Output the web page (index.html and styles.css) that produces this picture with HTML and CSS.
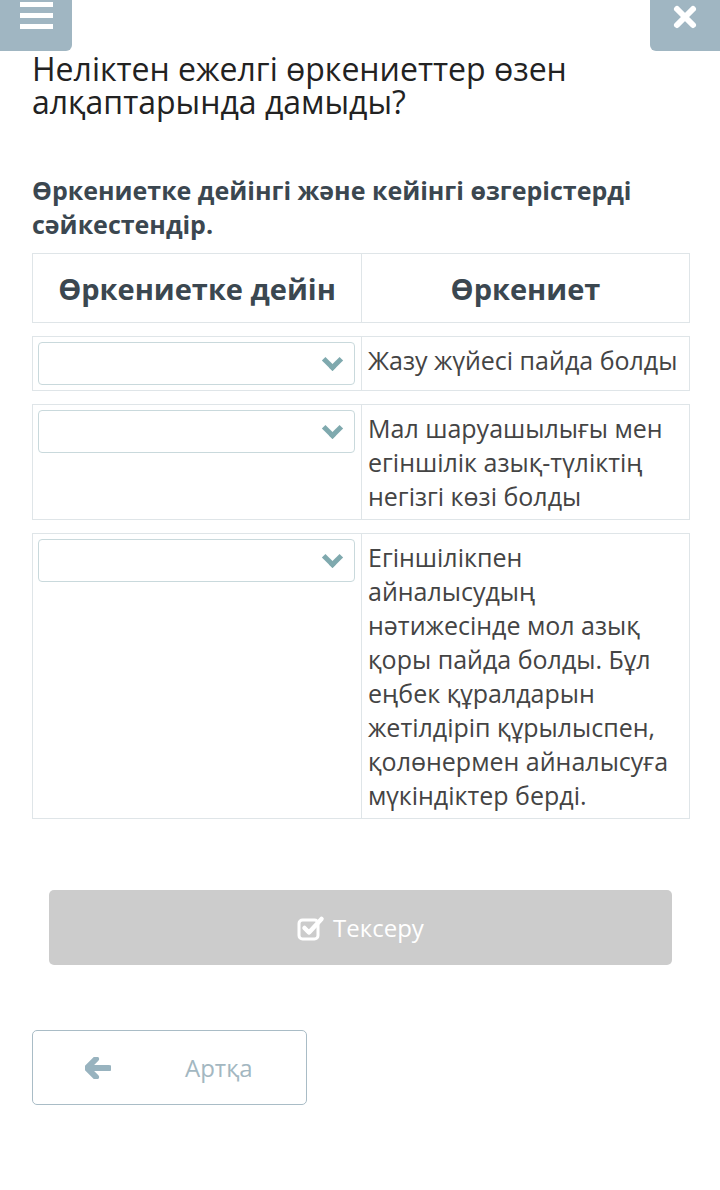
FILE: index.html
```html
<!DOCTYPE html>
<html lang="kk">
  <head>
    <meta charset="UTF-8" />
    <meta name="viewport" content="width=device-width, initial-scale=1.0" />
    <title>Сәйкестендір</title>
    <link rel="stylesheet" href="styles.css">
  </head>
  <body>
    <div class="topbar">
      <button class="menu-btn" type="button" aria-label="Мәзір">
        <span></span><span></span><span></span>
      </button>
      <button class="close-btn" type="button" aria-label="Жабу">
        <svg width="26" height="26" viewBox="0 0 26 26">
          <path d="M5 5 L21 21 M21 5 L5 21" stroke="#fff" stroke-width="6" stroke-linecap="round" />
        </svg>
      </button>
    </div>

    <div class="content">
      <h1 class="question">Неліктен ежелгі өркениеттер өзен алқаптарында дамыды?</h1>
      <h2 class="task">Өркениетке дейінгі және кейінгі өзгерістерді сәйкестендір.</h2>

      <div class="match-head">
        <div>Өркениетке дейін</div>
        <div>Өркениет</div>
      </div>

      <div class="match-row">
        <div class="pick">
          <div class="select"><span class="chevron"></span></div>
        </div>
        <div class="answer">Жазу жүйесі пайда болды</div>
      </div>

      <div class="match-row">
        <div class="pick">
          <div class="select"><span class="chevron"></span></div>
        </div>
        <div class="answer">Мал шаруашылығы мен егіншілік азық-түліктің негізгі көзі болды</div>
      </div>

      <div class="match-row">
        <div class="pick">
          <div class="select"><span class="chevron"></span></div>
        </div>
        <div class="answer">Егіншілікпен айналысудың нәтижесінде мол азық қоры пайда болды. Бұл еңбек құралдарын жетілдіріп құрылыспен, қолөнермен айналысуға мүкіндіктер берді.</div>
      </div>

      <button class="check-btn" type="button">
        <svg width="28" height="26" viewBox="0 0 28 26">
          <rect x="2" y="5" width="19" height="19" rx="3.5" fill="none" stroke="#fff" stroke-width="3" />
          <path d="M7.5 13 L12 17.5 L24.5 4" fill="none" stroke="#fff" stroke-width="4.5" stroke-linecap="round" stroke-linejoin="round" />
        </svg>
        Тексеру
      </button>

      <button class="back-btn" type="button">
        <svg width="26" height="22" viewBox="0 0 26 22">
          <path d="M11 2 L2 11 L11 20 M3 11 L24 11" fill="none" stroke="#98b3bf" stroke-width="6" stroke-linecap="round" stroke-linejoin="round" />
        </svg>
        <span>Артқа</span>
      </button>
    </div>
  </body>
</html>
```

FILE: styles.css
```css
body {
  margin: 0;
  padding: 0;
  background: #fff;
  font-family: "Open Sans", "Noto Sans", sans-serif;
  color: #333;
}

.topbar {
  display: flex;
  justify-content: space-between;
  height: 51px;
}

.menu-btn,
.close-btn {
  border: none;
  background-color: #a0b6c2;
  padding: 0;
  cursor: pointer;
}

.menu-btn {
  width: 72px;
  height: 51px;
  border-bottom-right-radius: 6px;
  display: flex;
  flex-direction: column;
  align-items: center;
  gap: 6px;
  padding-top: 2px;
}

.menu-btn span {
  display: block;
  width: 33px;
  height: 5px;
  background: #fff;
}

.close-btn {
  width: 70px;
  height: 51px;
  border-bottom-left-radius: 6px;
  display: flex;
  justify-content: center;
  padding-top: 4px;
}

.content {
  padding: 0 30px 0 32px;
}

.question {
  margin: 1px 0 0;
  font-size: 32px;
  font-weight: 400;
  line-height: 33px;
  color: #222;
}

.task {
  margin: 55px 0 12px;
  font-size: 25px;
  font-weight: 700;
  line-height: 34px;
  color: #3b4750;
}

.match-head,
.match-row {
  display: grid;
  grid-template-columns: 328px 1fr;
  border: 1px solid #dfe5e8;
}

.match-head {
  height: 68px;
  align-items: stretch;
}

.match-head div {
  display: flex;
  align-items: center;
  justify-content: center;
  font-size: 29px;
  font-weight: 700;
  color: #3b4750;
}

.match-head div + div {
  border-left: 1px solid #dfe5e8;
}

.match-row {
  margin-top: 13px;
}

.pick {
  padding: 5px 6px 5px 5px;
}

.select {
  height: 41px;
  border: 1px solid #c9d9dc;
  border-radius: 4px;
  display: flex;
  justify-content: flex-end;
  align-items: center;
  padding-right: 14px;
}

.chevron {
  width: 10px;
  height: 10px;
  border-right: 5px solid #7fa9ae;
  border-bottom: 5px solid #7fa9ae;
  transform: rotate(45deg);
  margin-top: -6px;
}

.answer {
  border-left: 1px solid #dfe5e8;
  padding: 6px 5px 6px 6px;
  font-size: 25px;
  line-height: 34px;
  color: #444;
}

.check-btn {
  display: flex;
  align-items: center;
  justify-content: center;
  gap: 8px;
  width: 623px;
  height: 75px;
  margin: 71px 0 0 17px;
  border: none;
  border-radius: 5px;
  background-color: #cccccc;
  color: #fff;
  font-family: inherit;
  font-size: 24px;
}

.back-btn {
  display: flex;
  align-items: center;
  width: 275px;
  height: 75px;
  margin-top: 65px;
  padding: 0 0 0 52px;
  background: #fff;
  border: 1px solid #a9bcc6;
  border-radius: 5px;
  color: #a3b7c1;
  font-family: inherit;
  font-size: 24px;
}

.back-btn span {
  margin-left: 74px;
}
```
